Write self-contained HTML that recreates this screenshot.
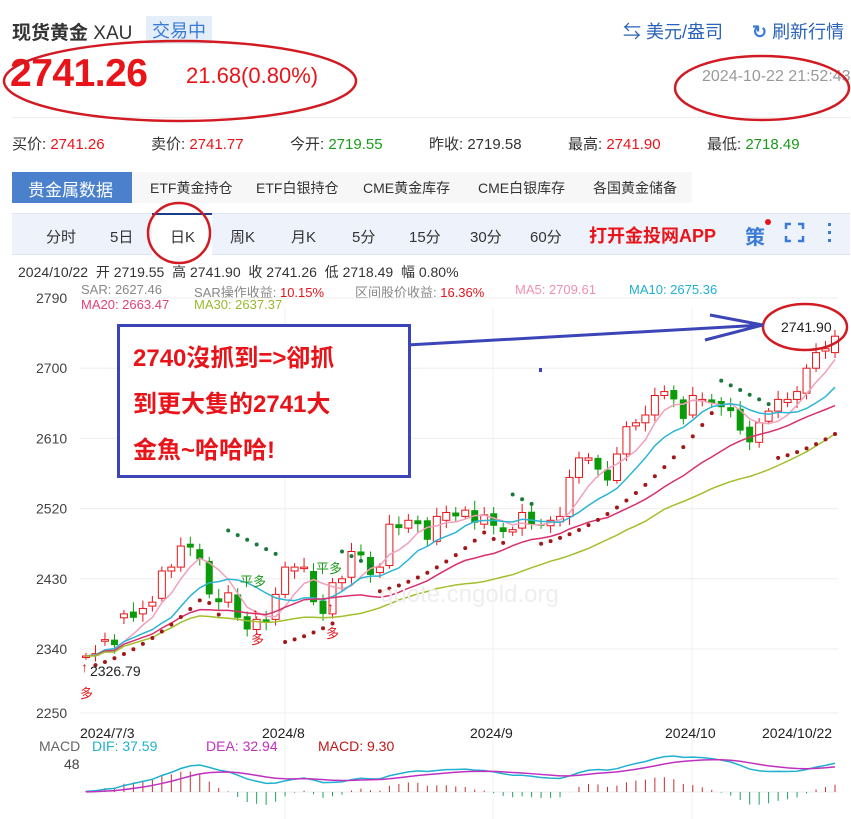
<!DOCTYPE html>
<html><head><meta charset="utf-8">
<style>
body{margin:0;width:851px;height:819px;overflow:hidden;background:#fff;font-family:"Liberation Sans","Noto Sans CJK SC",sans-serif;position:relative}
.a{position:absolute;white-space:nowrap}
</style></head><body>
<div class="a" style="left:12px;top:18px;font-size:19px;font-weight:bold;color:#333">现货黄金 <span style="font-weight:normal">XAU</span></div>
<div class="a" style="left:146px;top:16px;font-size:18px;color:#3a7bd5;background:#e3eef9;padding:1px 6px">交易中</div>
<div class="a" style="left:623px;top:18px;font-size:18px;color:#2a63b8">⇆ 美元/盎司</div>
<div class="a" style="left:752px;top:18px;font-size:18px;color:#2a63b8"><span style="color:#3a7bd5;font-weight:bold">↻</span> 刷新行情</div>
<div class="a" style="left:10px;top:52px;font-size:39px;font-weight:bold;color:#e8141a;letter-spacing:-0.5px">2741.26</div>
<div class="a" style="left:186px;top:63px;font-size:22px;color:#e8141a">21.68(0.80%)</div>
<div class="a" style="left:702px;top:68px;font-size:16px;color:#999">2024-10-22 21:52:43</div>
<div class="a" style="left:12px;top:117px;width:838px;height:1px;background:#eee"></div>
<div class="a" style="left:12px;top:133px;font-size:15px;color:#333;word-spacing:0">
<span>买价: <span style="color:#e8141a">2741.26</span></span>
<span style="position:absolute;left:139px">卖价: <span style="color:#e8141a">2741.77</span></span>
<span style="position:absolute;left:278px">今开: <span style="color:#1a9b1a">2719.55</span></span>
<span style="position:absolute;left:417px">昨收: 2719.58</span>
<span style="position:absolute;left:556px">最高: <span style="color:#e8141a">2741.90</span></span>
<span style="position:absolute;left:695px">最低: <span style="color:#1a9b1a">2718.49</span></span>
</div>
<div class="a" style="left:12px;top:172px;width:120px;height:31px;background:#4a80cc"></div>
<div class="a" style="left:132px;top:172px;width:560px;height:31px;background:#f7f7f7"></div>
<div class="a" style="left:28px;top:176px;font-size:17px;color:#fff">贵金属数据</div>
<div class="a" style="left:150px;top:178px;font-size:14px;color:#333">ETF黄金持仓</div>
<div class="a" style="left:256px;top:178px;font-size:14px;color:#333">ETF白银持仓</div>
<div class="a" style="left:363px;top:178px;font-size:14px;color:#333">CME黄金库存</div>
<div class="a" style="left:478px;top:178px;font-size:14px;color:#333">CME白银库存</div>
<div class="a" style="left:593px;top:178px;font-size:14px;color:#333">各国黄金储备</div>
<div class="a" style="left:12px;top:213px;width:838px;height:40px;background:#eef3fb;border-top:1px solid #dde6f2;border-bottom:1px solid #dde6f2"></div>
<div class="a" style="left:152px;top:213px;width:60px;height:41px;background:#fff;border-top:2px solid #1a3a8a"></div>
<div class="a" style="left:46px;top:226px;font-size:15px;color:#333">分时</div>
<div class="a" style="left:110px;top:226px;font-size:15px;color:#333">5日</div>
<div class="a" style="left:170px;top:226px;font-size:15px;color:#333">日K</div>
<div class="a" style="left:230px;top:226px;font-size:15px;color:#333">周K</div>
<div class="a" style="left:291px;top:226px;font-size:15px;color:#333">月K</div>
<div class="a" style="left:352px;top:226px;font-size:15px;color:#333">5分</div>
<div class="a" style="left:409px;top:226px;font-size:15px;color:#333">15分</div>
<div class="a" style="left:470px;top:226px;font-size:15px;color:#333">30分</div>
<div class="a" style="left:530px;top:226px;font-size:15px;color:#333">60分</div>
<div class="a" style="left:589px;top:222px;font-size:18px;font-weight:bold;color:#e8141a">打开金投网APP</div>
<div class="a" style="left:745px;top:221px;font-size:20px;color:#3a7bd5;font-weight:bold">策</div>
<div class="a" style="left:765px;top:219px;width:6px;height:6px;border-radius:3px;background:#e8141a"></div>
<svg class="a" style="left:784px;top:222px" width="60" height="22"><g fill="none" stroke="#3a7bd5" stroke-width="2.5"><path d="M2 7V2h5M14 2h5v5M19 14v5h-5M7 19H2v-5"/></g><g fill="#3a7bd5"><rect x="44" y="1" width="3" height="3"/><rect x="44" y="9" width="3" height="3"/><rect x="44" y="17" width="3" height="3"/></g></svg>
<div class="a" style="left:18px;top:262px;font-size:14px;color:#333">2024/10/22 &nbsp;开 2719.55 &nbsp;高 2741.90 &nbsp;收 2741.26 &nbsp;低 2718.49 &nbsp;幅 0.80%</div>
<div class="a" style="left:81px;top:282px;font-size:13px;color:#888">SAR: 2627.46</div>
<div class="a" style="left:194px;top:282px;font-size:13px;color:#888">SAR操作收益: <span style="color:#e8141a">10.15%</span></div>
<div class="a" style="left:355px;top:282px;font-size:13px;color:#888">区间股价收益: <span style="color:#e8141a">16.36%</span></div>
<div class="a" style="left:515px;top:282px;font-size:13px;color:#f090b0">MA5: 2709.61</div>
<div class="a" style="left:629px;top:282px;font-size:13px;color:#20b0d0">MA10: 2675.36</div>
<div class="a" style="left:81px;top:297px;font-size:13px;color:#e0407a">MA20: 2663.47</div>
<div class="a" style="left:194px;top:297px;font-size:13px;color:#9ab830">MA30: 2637.37</div>
<svg id="c" class="a" style="left:0;top:0" width="851" height="819"></svg>
<div class="a" style="left:117px;top:324px;width:288px;height:148px;border:3px solid #3b45b8;background:#fff"></div>
<div class="a" style="left:133px;top:336px;font-size:24px;font-weight:bold;color:#e8141a;line-height:46px">2740沒抓到=>卻抓<br>到更大隻的2741大<br>金魚~哈哈哈!</div>
<script>
(function(){
var s=document.getElementById('c'),h='';
function Y(p){return 649-(p-2340)*0.78;}
[2790,2700,2610,2520,2430,2340,2250].forEach(function(p){var y=Y(p);if(p==2250)y=713;h+='<line x1="80" x2="838" y1="'+y+'" y2="'+y+'" stroke="#eee"/><text x="36" y="'+(y+5)+'" font-size="14" fill="#444" font-family="Liberation Sans">'+p+'</text>';});
[285,493,692].forEach(function(x){h+='<line x1="'+x+'" x2="'+x+'" y1="307" y2="819" stroke="#f0f0f0"/>';});
h+='<line x1="80" x2="838" y1="792" y2="792" stroke="#eee"/>';
var K=[[2331,2330],[2334,2333],[2352,2350],[2345,2352],[2385,2380],[2380,2388],[2392,2385],[2400,2395],[2440,2405],[2445,2440],[2472,2445],[2470,2475],[2455,2468],[2410,2453],[2400,2405],[2412,2400],[2380,2410],[2365,2382],[2378,2365],[2375,2378],[2410,2378],[2445,2410],[2445,2440],[2445,2445],[2400,2440],[2385,2402],[2425,2385],[2430,2425],[2465,2432],[2460,2465],[2435,2458],[2445,2438],[2500,2447],[2495,2500],[2505,2495],[2500,2505],[2480,2505],[2510,2478],[2515,2505],[2510,2515],[2518,2510],[2502,2518],[2512,2500],[2498,2514],[2490,2496],[2493,2490],[2515,2495],[2500,2516],[2498,2500],[2505,2498],[2510,2503],[2560,2510],[2585,2560],[2585,2582],[2570,2585],[2556,2570],[2590,2556],[2625,2590],[2630,2626],[2640,2630],[2665,2640],[2670,2665],[2660,2672],[2635,2660],[2665,2640],[2660,2660],[2655,2660],[2650,2658],[2645,2650],[2620,2648],[2605,2625],[2630,2605],[2645,2632],[2660,2645],[2660,2656],[2670,2660],[2700,2668],[2720,2700],[2725,2722],[2741,2720]];
var n=K.length,x0=86,dx=(835-86)/(n-1),c=[],H=[],L=[];
K.forEach(function(k,i){var C=k[0],O=k[1],x=x0+i*dx,up=C>=O,col=up?'#e8141a':'#0a9a0a';c.push(C);
var hi=Math.max(C,O)+4+((i*7)%9),lo=Math.min(C,O)-4-((i*5)%8);H.push(hi);L.push(lo);
h+='<line x1="'+x+'" x2="'+x+'" y1="'+Y(hi)+'" y2="'+Y(lo)+'" stroke="'+col+'"/>';
var t=Y(Math.max(C,O)),b=Math.max(1.5,Y(Math.min(C,O))-t);
h+='<rect x="'+(x-3.5)+'" y="'+t+'" width="7" height="'+b+'" '+(up?'fill="#fff" stroke="'+col+'"':'fill="'+col+'"')+'/>';});
function ma(m,col){var pts=[];for(var i=0;i<n;i++){var a=0,q=0;for(var j=Math.max(0,i-m+1);j<=i;j++){a+=c[j];q++;}var v=a/q;if(m>=20)v-= (m==20?12:22)*Math.min(1,i/15);pts.push((x0+i*dx).toFixed(1)+','+Y(v).toFixed(1));}h+='<polyline points="'+pts.join(' ')+'" fill="none" stroke="'+col+'" stroke-width="1.5"/>';}
ma(5,'#f2a0bb');ma(10,'#2bb5d6');ma(20,'#d8306e');ma(30,'#a2bf2c');
var segs=[[15,20],[27,30],[45,47],[67,72]];
for(var i=1;i<n;i++){var x=x0+i*dx,isTop=false,pos=0,len=1;segs.forEach(function(g){if(i>=g[0]&&i<=g[1]){isTop=true;pos=i-g[0];len=g[1]-g[0]+1;}});
var y;if(isTop){var mx=0;for(var j=Math.max(0,i-pos-4);j<=i-pos;j++)mx=Math.max(mx,H[j]);y=Y(mx+8-pos*6);}
else{var st=i;while(st>0&&!segs.some(function(g){return st-1>=g[0]&&st-1<=g[1];}))st--;var mn=9999;for(var j=Math.max(0,st-3);j<=st;j++)mn=Math.min(mn,L[j]);var k2=i-st;y=Y(mn-10+k2*(3+k2*0.35));if(Y(mn-10+k2*(3+k2*0.35))<Y(L[i])-2)y=Y(L[i]-6);}
h+='<circle cx="'+x+'" cy="'+y+'" r="2" fill="'+(isTop?'#1a7a3a':'#a01818')+'"/>';}
h+='<text x="380" y="602" font-size="24" fill="#eee" font-family="Liberation Sans">quote.cngold.org</text>';
h+='<ellipse cx="180" cy="81" rx="176" ry="40" fill="none" stroke="#d21a22" stroke-width="2.5"/>';
h+='<ellipse cx="762" cy="88" rx="87" ry="32" fill="none" stroke="#d21a22" stroke-width="2.5"/>';
h+='<ellipse cx="179" cy="233" rx="31" ry="30" fill="none" stroke="#d21a22" stroke-width="2.5"/>';
h+='<ellipse cx="805" cy="327" rx="42" ry="23" fill="none" stroke="#d21a22" stroke-width="2.5"/>';
h+='<text x="781" y="332" font-size="14" fill="#222" font-family="Liberation Sans">2741.90</text>';
h+='<path d="M407 345L763 325M710 315L763 325L705 340" fill="none" stroke="#3b45b8" stroke-width="3"/>';
h+='<rect x="539" y="368" width="3" height="4" fill="#3b45b8"/>';
h+='<text x="90" y="676" font-size="14" fill="#222" font-family="Liberation Sans">2326.79</text>';
h+='<text x="240" y="586" font-size="13" fill="#1a9b1a" font-family="Noto Sans CJK SC">平多</text><text x="316" y="573" font-size="13" fill="#1a9b1a" font-family="Noto Sans CJK SC">平多</text>';
[[86,672],[257,618],[332,612]].forEach(function(p){h+='<text x="'+(p[0]-5)+'" y="'+p[1]+'" font-size="14" fill="#e8141a" font-family="Liberation Sans">↑</text><text x="'+(p[0]-6)+'" y="'+(p[1]+26)+'" font-size="13" fill="#e8141a" font-family="Noto Sans CJK SC">多</text>';});
[[80,'2024/7/3'],[262,'2024/8'],[470,'2024/9'],[665,'2024/10'],[762,'2024/10/22']].forEach(function(d){h+='<text x="'+d[0]+'" y="738" font-size="14" fill="#222" font-family="Liberation Sans">'+d[1]+'</text>';});
h+='<text x="39" y="751" font-size="14" fill="#666" font-family="Liberation Sans">MACD</text><text x="92" y="751" font-size="14" fill="#20b0d0" font-family="Liberation Sans">DIF: 37.59</text><text x="206" y="751" font-size="14" fill="#c030c0" font-family="Liberation Sans">DEA: 32.94</text><text x="318" y="751" font-size="14" fill="#c01818" font-family="Liberation Sans">MACD: 9.30</text>';
h+='<text x="64" y="769" font-size="14" fill="#444" font-family="Liberation Sans">48</text>';
var e1=c[0]-10,e2=c[0]-10,dif=[],dea=[],d2=0;
for(var i=0;i<n;i++){e1=e1+(c[i]-e1)*2/13;e2=e2+(c[i]-e2)*2/27;dif.push(e1-e2);d2=d2+(dif[i]-d2)*0.2;dea.push(d2);}
function my(v){return 792-v*0.75;}
var p1=[],p2=[];for(var i=0;i<n;i++){var x=x0+i*dx,m=dif[i]-dea[i];h+='<line x1="'+x+'" x2="'+x+'" y1="792" y2="'+(792-m*1.5)+'" stroke="'+(m>=0?'#c03030':'#20a060')+'"/>';p1.push(x+','+my(dif[i]));p2.push(x+','+my(dea[i]));}
h+='<polyline points="'+p1.join(' ')+'" fill="none" stroke="#20b0d0" stroke-width="1.5"/><polyline points="'+p2.join(' ')+'" fill="none" stroke="#c030c0" stroke-width="1.5"/>';
s.innerHTML=h;
})();
</script>
</body></html>
